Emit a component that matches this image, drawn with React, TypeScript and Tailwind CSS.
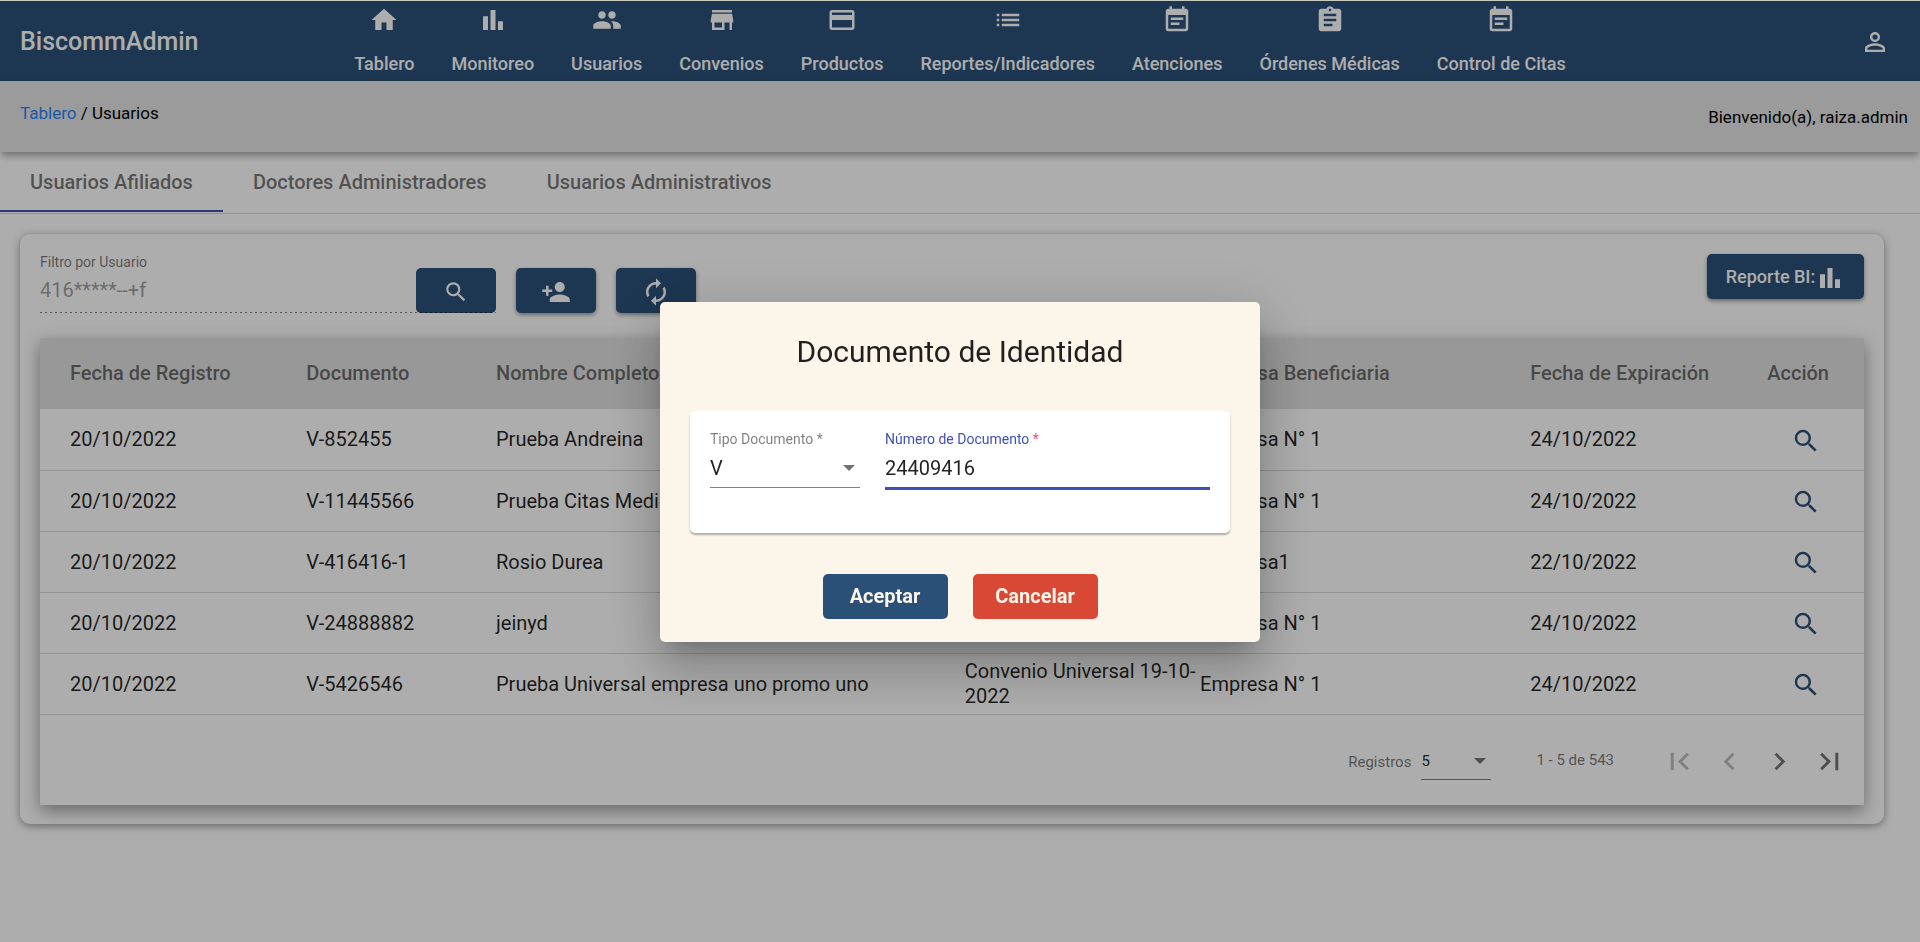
import type { ReactNode } from "react";
import {
  MdHome,
  MdBarChart,
  MdPeople,
  MdStore,
  MdCreditCard,
  MdList,
  MdEventNote,
  MdAssignment,
  MdPersonOutline,
  MdSearch,
  MdPersonAdd,
  MdAutorenew,
  MdFirstPage,
  MdChevronLeft,
  MdChevronRight,
  MdLastPage,
} from "react-icons/md";

const NAV = [
  { label: "Tablero", Icon: MdHome },
  { label: "Monitoreo", Icon: MdBarChart },
  { label: "Usuarios", Icon: MdPeople },
  { label: "Convenios", Icon: MdStore },
  { label: "Productos", Icon: MdCreditCard },
  { label: "Reportes/Indicadores", Icon: MdList },
  { label: "Atenciones", Icon: MdEventNote },
  { label: "Órdenes Médicas", Icon: MdAssignment },
  { label: "Control de Citas", Icon: MdEventNote },
];

const TABS = ["Usuarios Afiliados", "Doctores Administradores", "Usuarios Administrativos"];

const COLUMNS = [
  { label: "Fecha de Registro", width: "w-[14.6%]" },
  { label: "Documento", width: "w-[10.4%]" },
  { label: "Nombre Completo", width: "w-[25.7%]" },
  { label: "Convenio", width: "w-[12.9%]" },
  { label: "Empresa Beneficiaria", width: "w-[18.1%]" },
  { label: "Fecha de Expiración", width: "w-[13%]" },
  { label: "Acción", width: "w-[5.3%]" },
];

const CONVENIO = "Convenio Universal 19-10-2022";

const ROWS = [
  ["20/10/2022", "V-852455", "Prueba Andreina", CONVENIO, "Empresa N° 1", "24/10/2022"],
  ["20/10/2022", "V-11445566", "Prueba Citas Medicas", CONVENIO, "Empresa N° 1", "24/10/2022"],
  ["20/10/2022", "V-416416-1", "Rosio Durea", CONVENIO, "Empresa1", "22/10/2022"],
  ["20/10/2022", "V-24888882", "jeinyd", CONVENIO, "Empresa N° 1", "24/10/2022"],
  ["20/10/2022", "V-5426546", "Prueba Universal empresa uno promo uno", CONVENIO, "Empresa N° 1", "24/10/2022"],
];

function Header() {
  return (
    <header className="grid h-20 grid-cols-[1fr_auto_1fr] items-center bg-[#2b5078] px-5 text-white">
      <span className="pt-0.5 text-[25px] font-medium">BiscommAdmin</span>
      <nav className="flex h-full gap-[37px]">
        {NAV.map(({ label, Icon }) => (
          <a key={label} href="#" className="flex flex-col items-center pt-1 text-[18px] font-medium">
            <Icon className="size-[30px]" />
            <span className="mt-[13px] leading-8">{label}</span>
          </a>
        ))}
      </nav>
      <button type="button" aria-label="Perfil" className="mr-2.5 justify-self-end pt-0.5">
        <MdPersonOutline className="size-[30px]" />
      </button>
    </header>
  );
}

function Breadcrumb() {
  return (
    <div className="flex h-[71px] justify-between bg-[#e5e5e5] pl-5 pr-3 text-[17px] leading-6 text-black shadow-[0_4px_8px_-1px_rgba(0,0,0,0.4)]">
      <div className="pt-5">
        <a href="#" className="text-[#2784f5]">
          Tablero
        </a>{" "}
        / Usuarios
      </div>
      <div className="pt-6">Bienvenido(a), raiza.admin</div>
    </div>
  );
}

function Tabs() {
  return (
    <div role="tablist" className="flex h-[62px] border-b border-black/15">
      {TABS.map((tab, i) => (
        <button
          key={tab}
          type="button"
          role="tab"
          aria-selected={i === 0}
          className={
            i === 0
              ? "h-[60px] border-b-2 border-[#3f51b5] px-[30px] pt-0.5 text-[20px] font-medium text-black/55"
              : "h-[60px] border-b-2 border-transparent px-[30px] pt-0.5 text-[20px] font-medium text-black/55"
          }
        >
          {tab}
        </button>
      ))}
    </div>
  );
}

function ActionButton({ label, flat = false, children }: { label: string; flat?: boolean; children: ReactNode }) {
  return (
    <button
      type="button"
      aria-label={label}
      className={
        flat
          ? "flex h-[45px] w-20 items-center justify-center rounded-[5px] bg-[#2b5078] pt-[3px] text-white"
          : "flex h-[45px] w-20 items-center justify-center rounded-[5px] bg-[#2b5078] pt-[3px] text-white shadow-[0_2px_4px_rgba(0,0,0,0.4)]"
      }
    >
      {children}
    </button>
  );
}

function Toolbar() {
  return (
    <div className="flex items-start justify-between">
      <div className="flex items-end gap-5">
        <div className="relative flex h-[59px] w-[456px] items-end after:absolute after:inset-x-0 after:bottom-0 after:h-px after:bg-[repeating-linear-gradient(to_right,rgba(0,0,0,0.5)_0_2px,transparent_2px_5px)]">
          <div className="flex flex-1 flex-col pb-[5px]">
            <label htmlFor="filtro" className="text-[14px] leading-5 text-black/55">
              Filtro por Usuario
            </label>
            <input
              id="filtro"
              type="text"
              placeholder="416*****--+f"
              className="h-9 bg-transparent text-[20px] outline-none placeholder:text-black/40"
            />
          </div>
          <ActionButton label="Buscar" flat>
            <MdSearch className="size-[26px]" />
          </ActionButton>
        </div>
        <ActionButton label="Agregar usuario">
          <MdPersonAdd className="size-[30px]" />
        </ActionButton>
        <ActionButton label="Actualizar">
          <MdAutorenew className="size-[30px]" />
        </ActionButton>
      </div>
      <button
        type="button"
        className="flex h-[45px] w-[157px] items-center justify-center rounded-[5px] bg-[#2b5078] text-[18px] font-medium text-white shadow-[0_2px_4px_rgba(0,0,0,0.4)]"
      >
        Reporte BI:
        <MdBarChart className="mt-0.5 size-[30px]" />
      </button>
    </div>
  );
}

function Arrow() {
  return (
    <svg viewBox="0 0 12 6" aria-hidden="true" className="pointer-events-none col-start-1 row-start-1 mr-[5px] h-1.5 w-3 justify-self-end fill-black/55">
      <path d="M0 0h12L6 6z" />
    </svg>
  );
}

function Paginator() {
  return (
    <div className="flex h-[90px] items-center justify-end pt-1 pr-2.5 text-[15px] text-black/55">
      <label htmlFor="registros" className="mr-2.5 pt-px">
        Registros
      </label>
      <div className="grid h-9 w-[70px] items-center border-b border-black/50">
        <select id="registros" defaultValue="5" className="col-start-1 row-start-1 w-full appearance-none bg-transparent text-black/87 outline-none">
          <option>5</option>
          <option>10</option>
        </select>
        <Arrow />
      </div>
      <span className="ml-[45px] mr-10 mb-[3px]">1 - 5 de 543</span>
      {[
        { label: "Primera página", Icon: MdFirstPage, off: true },
        { label: "Página anterior", Icon: MdChevronLeft, off: true },
        { label: "Página siguiente", Icon: MdChevronRight, off: false },
        { label: "Última página", Icon: MdLastPage, off: false },
      ].map(({ label, Icon, off }) => (
        <button key={label} type="button" aria-label={label} disabled={off} className="flex size-[50px] items-center justify-center text-black/55 disabled:text-black/26">
          <Icon className="size-[35px]" />
        </button>
      ))}
    </div>
  );
}

function UsersTable() {
  return (
    <div className="mt-[25px] bg-white shadow-[0_6px_16px_rgba(0,0,0,0.4)]">
      <table className="w-full table-fixed border-collapse text-left text-[20px] leading-[25px]">
        <thead>
          <tr className="h-[71px] bg-[#e1e1e1] text-black/55">
            {COLUMNS.map(({ label, width }, i) => (
              <th key={label} className={i === 0 ? `${width} pl-[30px] font-medium` : `${width} font-medium whitespace-nowrap`}>
                {label}
              </th>
            ))}
          </tr>
        </thead>
        <tbody className="text-black/87">
          {ROWS.map((row) => (
            <tr key={row[1]} className="h-[61px] border-b border-black/15">
              {row.map((cell, i) => (
                <td key={i} className={i === 0 ? "pt-px pl-[30px]" : "pt-px"}>
                  {cell}
                </td>
              ))}
              <td>
                <button type="button" aria-label={`Ver ${row[1]}`} className="ml-6 flex pt-[3px] text-[#2b5078]">
                  <MdSearch className="size-[30px]" />
                </button>
              </td>
            </tr>
          ))}
        </tbody>
      </table>
      <Paginator />
    </div>
  );
}

function DocumentDialog() {
  return (
    <div className="fixed inset-x-0 top-px bottom-0 flex items-center justify-center bg-black/32 pt-px">
      <div
        role="dialog"
        aria-modal="true"
        aria-labelledby="dialog-title"
        className="flex w-[600px] flex-col rounded-[5px] bg-[#fcf5e9] px-[30px] pt-[30px] pb-[23px] text-black/87 shadow-[0_14px_19px_-9px_rgba(0,0,0,0.2),0_30px_48px_4px_rgba(0,0,0,0.14),0_11px_58px_10px_rgba(0,0,0,0.12)]"
      >
        <h2 id="dialog-title" className="text-center text-[30px] leading-10">
          Documento de Identidad
        </h2>
        <div className="mt-[39px] flex h-[122px] gap-[25px] rounded-[5px] bg-white px-5 pt-[18px] shadow-[0_2px_2px_rgba(0,0,0,0.3)]">
          <div className="w-[150px]">
            <label htmlFor="tipo" className="block text-[14px] leading-5 text-black/50">
              Tipo Documento *
            </label>
            <div className="grid h-[39px] items-center border-b border-black/50">
              <select id="tipo" defaultValue="V" className="col-start-1 row-start-1 w-full appearance-none bg-transparent text-[20px] outline-none">
                <option>V</option>
                <option>E</option>
              </select>
              <Arrow />
            </div>
          </div>
          <div className="flex-1">
            <label htmlFor="numero" className="block text-[14px] leading-5 text-[#3f51b5]">
              Número de Documento <span className="text-[#ff4081]">*</span>
            </label>
            <input
              id="numero"
              type="text"
              defaultValue="24409416"
              className="h-[41px] w-full border-b-3 border-[#3f51b5] bg-transparent text-[20px] outline-none"
            />
          </div>
        </div>
        <div className="mt-[41px] flex justify-center gap-[25px] text-[20px] font-bold text-[#fcf5e9]">
          <button type="button" className="h-[45px] w-[125px] rounded-[5px] bg-[#2b5078] pb-0.5">
            Aceptar
          </button>
          <button type="button" className="h-[45px] w-[125px] rounded-[5px] bg-[#d94835] pb-0.5">
            Cancelar
          </button>
        </div>
      </div>
    </div>
  );
}

export default function App() {
  return (
    <div className="min-h-screen border-t border-[#c8ccc0] bg-white font-['Roboto',sans-serif]">
      <Header />
      <Breadcrumb />
      <Tabs />
      <main className="mt-5 mr-9 ml-5 rounded-[10px] bg-white px-5 pt-5 pb-[19px] shadow-[0_2px_8px_rgba(0,0,0,0.4)]">
        <Toolbar />
        <UsersTable />
      </main>
      <DocumentDialog />
    </div>
  );
}
